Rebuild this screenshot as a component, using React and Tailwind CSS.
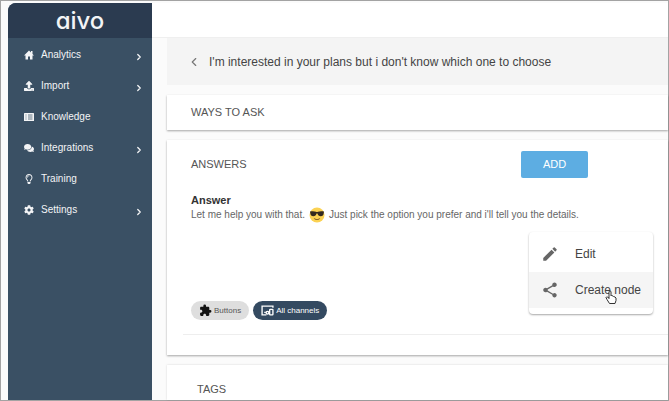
import React, { useState } from "react";
import { FaUpload, FaComments, FaRegLightbulb, FaCog } from "react-icons/fa";
import { MdEdit, MdShare, MdExtension } from "react-icons/md";
import { ChevronLeft, ChevronRight } from "lucide-react";

const HomeIcon = ({ size }) => (
  <svg width={size} height={size} viewBox="0 0 20 20" fill="currentColor">
    <path d="M10 1l4 4V2h3v6l3 3h-3v8h-5v-6H8v6H3v-8H0z" />
  </svg>
);

const KnowledgeIcon = ({ size }) => (
  <svg width={size} height={size} viewBox="0 0 20 20" fill="none">
    <rect x="0" y="2" width="20" height="16" rx="1" fill="currentColor" />
    <path d="M3 6h2M3 10h2M3 14h2M8 6h9M8 10h9M8 14h9" stroke="#3a5064" strokeWidth="1.5" />
  </svg>
);

const ChannelsIcon = ({ size }) => (
  <svg width={size} height={size} viewBox="0 0 24 24" fill="none" stroke="currentColor" strokeWidth="2.5">
    <path d="M10 20H2V4h20v3" />
    <path d="M6 15.5h3" />
    <rect x="16" y="10" width="6" height="10" rx="1" />
    <circle cx="12" cy="16" r="2.5" />
  </svg>
);

const CoolFace = () => (
  <svg role="img" aria-label="cool" width="16" height="16" viewBox="0 0 32 32" className="mx-1 inline-block">
    <circle cx="16" cy="16" r="15" fill="#fbd253" />
    <path
      d="M2 9c4-1 9-1 12 .5 1.300.6 2.700.6 4 0C21 8 26 8 30 9l-.5 3c-.5 5-2.500 6.500-6 6.500-4 0-5.500-2-6.500-5.500h-2c-1 3.500-2.500 5.500-6.500 5.500-3.500 0-5.500-1.500-6-6.500z"
      fill="#33291f"
    />
    <path d="M9.500 22c4 3 9 3 13 0-1.500 5-11.500 5-13 0z" fill="#6b4a22" />
  </svg>
);

const HandCursor = () => (
  <svg width="12" height="14" viewBox="0 0 24 28" className="pointer-events-none absolute right-9 bottom-2.5">
    <path
      d="M8 17V4a2 2 0 0 1 4 0v8l1-1 3 1 1 1 3 1 2 2v5l-2 6H9l-5-8-2-4c1-2 3-1 6 1z"
      fill="#fff"
      stroke="#333"
      strokeWidth="2"
      strokeLinejoin="round"
    />
  </svg>
);

const navItems = [
  { label: "Analytics", icon: HomeIcon, nested: true },
  { label: "Import", icon: FaUpload, nested: true },
  { label: "Knowledge", icon: KnowledgeIcon, nested: false },
  { label: "Integrations", icon: FaComments, nested: true },
  { label: "Training", icon: FaRegLightbulb, nested: false },
  { label: "Settings", icon: FaCog, nested: true },
];

const Sidebar = () => (
  <aside className="flex w-36 shrink-0 flex-col overflow-hidden rounded-tl-lg bg-[#3a5064] text-white">
    <div className="flex h-[35px] items-center justify-center bg-[#2b3b50]">
      <a
        href="#home"
        className="font-[Inter] text-2xl leading-none font-medium text-gray-100 [font-feature-settings:'cv11']"
      >
        aivo
      </a>
    </div>
    <nav className="pt-px">
      {navItems.map(({ label, icon: Icon, nested }) => (
        <a
          key={label}
          href={`#${label.toLowerCase()}`}
          className="flex h-[31px] items-center pr-2 pl-4 text-[10px] text-gray-100"
        >
          <span className="flex w-[17px] shrink-0 justify-start">
            <Icon size={10} />
          </span>
          <span className="flex-1">{label}</span>
          {nested && <ChevronRight size={10} strokeWidth={3} className="mt-1" />}
        </a>
      ))}
    </nav>
  </aside>
);

const ActionMenu = () => (
  <div
    role="menu"
    className="absolute top-[92px] right-[15px] w-[124px] rounded-sm bg-white pt-1 pb-1.5 text-xs text-[#444] shadow-[0_1px_2px_rgba(0,0,0,0.35)]"
  >
    <button role="menuitem" className="flex h-9 w-full items-center gap-4 pl-3">
      <MdEdit size={18} className="text-[#666]" />
      Edit
    </button>
    <button role="menuitem" className="flex h-9 w-full items-center gap-4 bg-[#f5f5f5] pl-3">
      <MdShare size={18} className="text-[#666]" />
      Create node
    </button>
    <HandCursor />
  </div>
);

export default function App() {
  const [menuOpen] = useState(true);

  return (
    <div className="flex min-h-screen border border-[#a3a3a3] bg-[#fbfbfb] pt-0.5 pl-[7px] font-['Liberation_Sans',Arial,sans-serif]">
      <Sidebar />

      <div className="flex min-w-0 flex-1 flex-col">
        <header className="h-[35px] border-b border-[#efefef] bg-white" />

        <main className="flex flex-1 flex-col pl-[15px] text-[#555]">
          <div className="flex h-[47px] items-center gap-2 bg-[#f4f4f4] pl-5">
            <button aria-label="Back">
              <ChevronLeft size={14} className="text-[#777]" />
            </button>
            <h1 className="text-xs text-[#444]">I'm interested in your plans but i don't know which one to choose</h1>
          </div>

          <section className="mt-2.5 flex h-[35px] items-center bg-white pl-6 shadow-[0_1px_2px_rgba(0,0,0,0.35)]">
            <h2 className="text-[11px]">WAYS TO ASK</h2>
          </section>

          <section className="relative mt-2.5 bg-white pb-5 pl-4 shadow-[0_1px_2px_rgba(0,0,0,0.35)]">
            <div className="flex items-center justify-between pt-[11px] pr-20 pl-2">
              <h2 className="text-[11px]">ANSWERS</h2>
              <button className="h-[27px] w-[67px] rounded-xs bg-[#5dade2] text-[11px] text-white">ADD</button>
            </div>

            <div className="pt-[15px] pl-2">
              <h3 className="text-[11px] leading-[14px] font-bold text-[#333]">Answer</h3>
              <p className="flex items-center text-[10px] leading-[14px] whitespace-pre text-[#666]">
                Let me help you with that.
                <CoolFace />
                Just pick the option you prefer and i'll tell you the details.
              </p>
            </div>

            <div className="mt-[78px] flex gap-1 border-b border-[#eee] pb-3.5 pl-2 text-[8px]">
              <span className="flex h-[19px] items-center gap-0.5 rounded-full bg-[#dedede] px-2">
                <MdExtension size={13} className="text-[#111]" />
                Buttons
              </span>
              <span className="flex h-[19px] items-center gap-0.5 rounded-full bg-[#344a61] px-2 text-white">
                <ChannelsIcon size={13} />
                All channels
              </span>
            </div>

            {menuOpen && <ActionMenu />}
          </section>

          <section className="mt-2.5 flex-1 bg-white pt-4 pl-[30px] shadow-[0_0_2px_rgba(0,0,0,0.15)]">
            <h2 className="text-[11px]">TAGS</h2>
          </section>
        </main>
      </div>
    </div>
  );
}
